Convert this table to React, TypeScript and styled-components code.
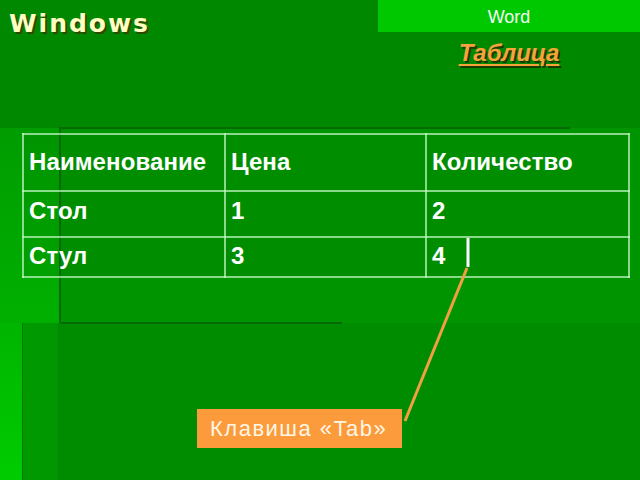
import React from "react";
import styled, { createGlobalStyle } from "styled-components";

const Global = createGlobalStyle`
  html, body { margin: 0; padding: 0; }
  body { width: 640px; height: 480px; overflow: hidden; background: #008800; }
`;

const line = "#066a06";

const Slide = styled.div`
  position: relative;
  width: 640px;
  height: 480px;
  box-sizing: border-box;
  overflow: hidden;
  font-family: "Liberation Sans", Arial, sans-serif;
  display: flex;
  flex-direction: column;
  background:
    linear-gradient(${line}, ${line}) 60px 127px / 510px 2px no-repeat,
    linear-gradient(${line}, ${line}) 59px 127px / 2px 196px no-repeat,
    linear-gradient(${line}, ${line}) 60px 322px / 282px 2px no-repeat,
    linear-gradient(#017801, #017801) 22px 323px / 1px 157px no-repeat,
    linear-gradient(#038503, #038503) 58px 324px / 1px 156px no-repeat,
    linear-gradient(to right, #009a00 0, #009600 36px, #008c00 38px, #008c00 100%) 22px 323px / 618px 157px no-repeat,
    linear-gradient(to bottom, #00b400, #00cc00) 0 323px / 22px 157px no-repeat,
    linear-gradient(to bottom, #009c00, #00b000) 0 128px / 60px 195px no-repeat,
    linear-gradient(#009400, #009400) 60px 128px / 580px 195px no-repeat,
    #008800;
`;

const Header = styled.div`
  display: flex;
  justify-content: space-between;
  align-items: flex-start;
  height: 133px;
`;

const Title = styled.div`
  font-family: "DejaVu Sans", Verdana, sans-serif;
  font-weight: bold;
  font-size: 25px;
  letter-spacing: 2px;
  color: #ffffc2;
  text-shadow: 2px 2px 0 #2f4a00;
  margin: 9px 0 0 9px;
  line-height: 30px;
`;

const RightCol = styled.div`
  width: 262px;
  display: flex;
  flex-direction: column;
  align-items: center;
`;

const WordBar = styled.div`
  width: 100%;
  height: 32px;
  background: #00c800;
  color: #f4fff4;
  font-size: 18px;
  line-height: 34px;
  text-align: center;
`;

const Subtitle = styled.div`
  margin-top: 7px;
  font-size: 24px;
  font-weight: bold;
  font-style: italic;
  text-decoration: underline;
  text-decoration-thickness: 2px;
  text-underline-offset: 3px;
  color: #f7a33c;
  text-shadow: 2px 2px 0 #1d3a00;
  line-height: 27px;
`;

const TableWrap = styled.div`
  margin-left: 22px;
  width: 606px;
`;

const Table = styled.table`
  border-collapse: collapse;
  width: 606px;
  table-layout: fixed;
  background: rgba(0, 110, 0, 0.15);
`;

const Row = styled.tr<{ $h: number }>`
  height: ${(p) => p.$h}px;
`;

const Cell = styled.td<{ $pt: number }>`
  border: 2px solid rgba(196, 250, 196, 0.7);
  vertical-align: top;
  padding: ${(p) => p.$pt}px 6px 0 5px;
  color: #ffffff;
  font-weight: bold;
  font-size: 24px;
  line-height: 26px;
  letter-spacing: 0.1px;
  box-sizing: border-box;
`;

const Overlay = styled.svg`
  position: absolute;
  left: 0;
  top: 0;
  pointer-events: none;
`;

const Bottom = styled.div`
  display: flex;
  padding: 0 0 0 197px;
  margin-top: 131px;
`;

const Label = styled.div`
  background: #fb9b3c;
  color: #fff6e6;
  font-size: 22px;
  letter-spacing: 1.5px;
  height: 39px;
  line-height: 40px;
  width: 205px;
  box-sizing: border-box;
  padding-left: 13px;
`;

const rows: { h: number; pt: number; cells: string[] }[] = [
  { h: 57, pt: 14, cells: ["Наименование", "Цена", "Количество"] },
  { h: 46, pt: 6, cells: ["Стол", "1", "2"] },
  { h: 40, pt: 5, cells: ["Стул", "3", "4"] },
];

export default function App() {
  return (
    <>
      <Global />
      <Slide>
        <Header>
          <Title>Windows</Title>
          <RightCol>
            <WordBar>Word</WordBar>
            <Subtitle>Таблица</Subtitle>
          </RightCol>
        </Header>
        <TableWrap>
          <Table>
            <colgroup>
              <col style={{ width: 202 }} />
              <col style={{ width: 201 }} />
              <col style={{ width: 203 }} />
            </colgroup>
            <tbody>
              {rows.map((r, i) => (
                <Row key={i} $h={r.h}>
                  {r.cells.map((c, j) => (
                    <Cell key={j} $pt={r.pt}>
                      {c}
                    </Cell>
                  ))}
                </Row>
              ))}
            </tbody>
          </Table>
        </TableWrap>
        <Bottom>
          <Label>Клавиша «Tab»</Label>
        </Bottom>
        <Overlay width="640" height="480" viewBox="0 0 640 480">
          <line x1="468" y1="238" x2="468" y2="267" stroke="#ffffff" strokeWidth="3" />
          <line x1="467" y1="268" x2="405" y2="421" stroke="#f0a040" strokeWidth="3" />
        </Overlay>
      </Slide>
    </>
  );
}
